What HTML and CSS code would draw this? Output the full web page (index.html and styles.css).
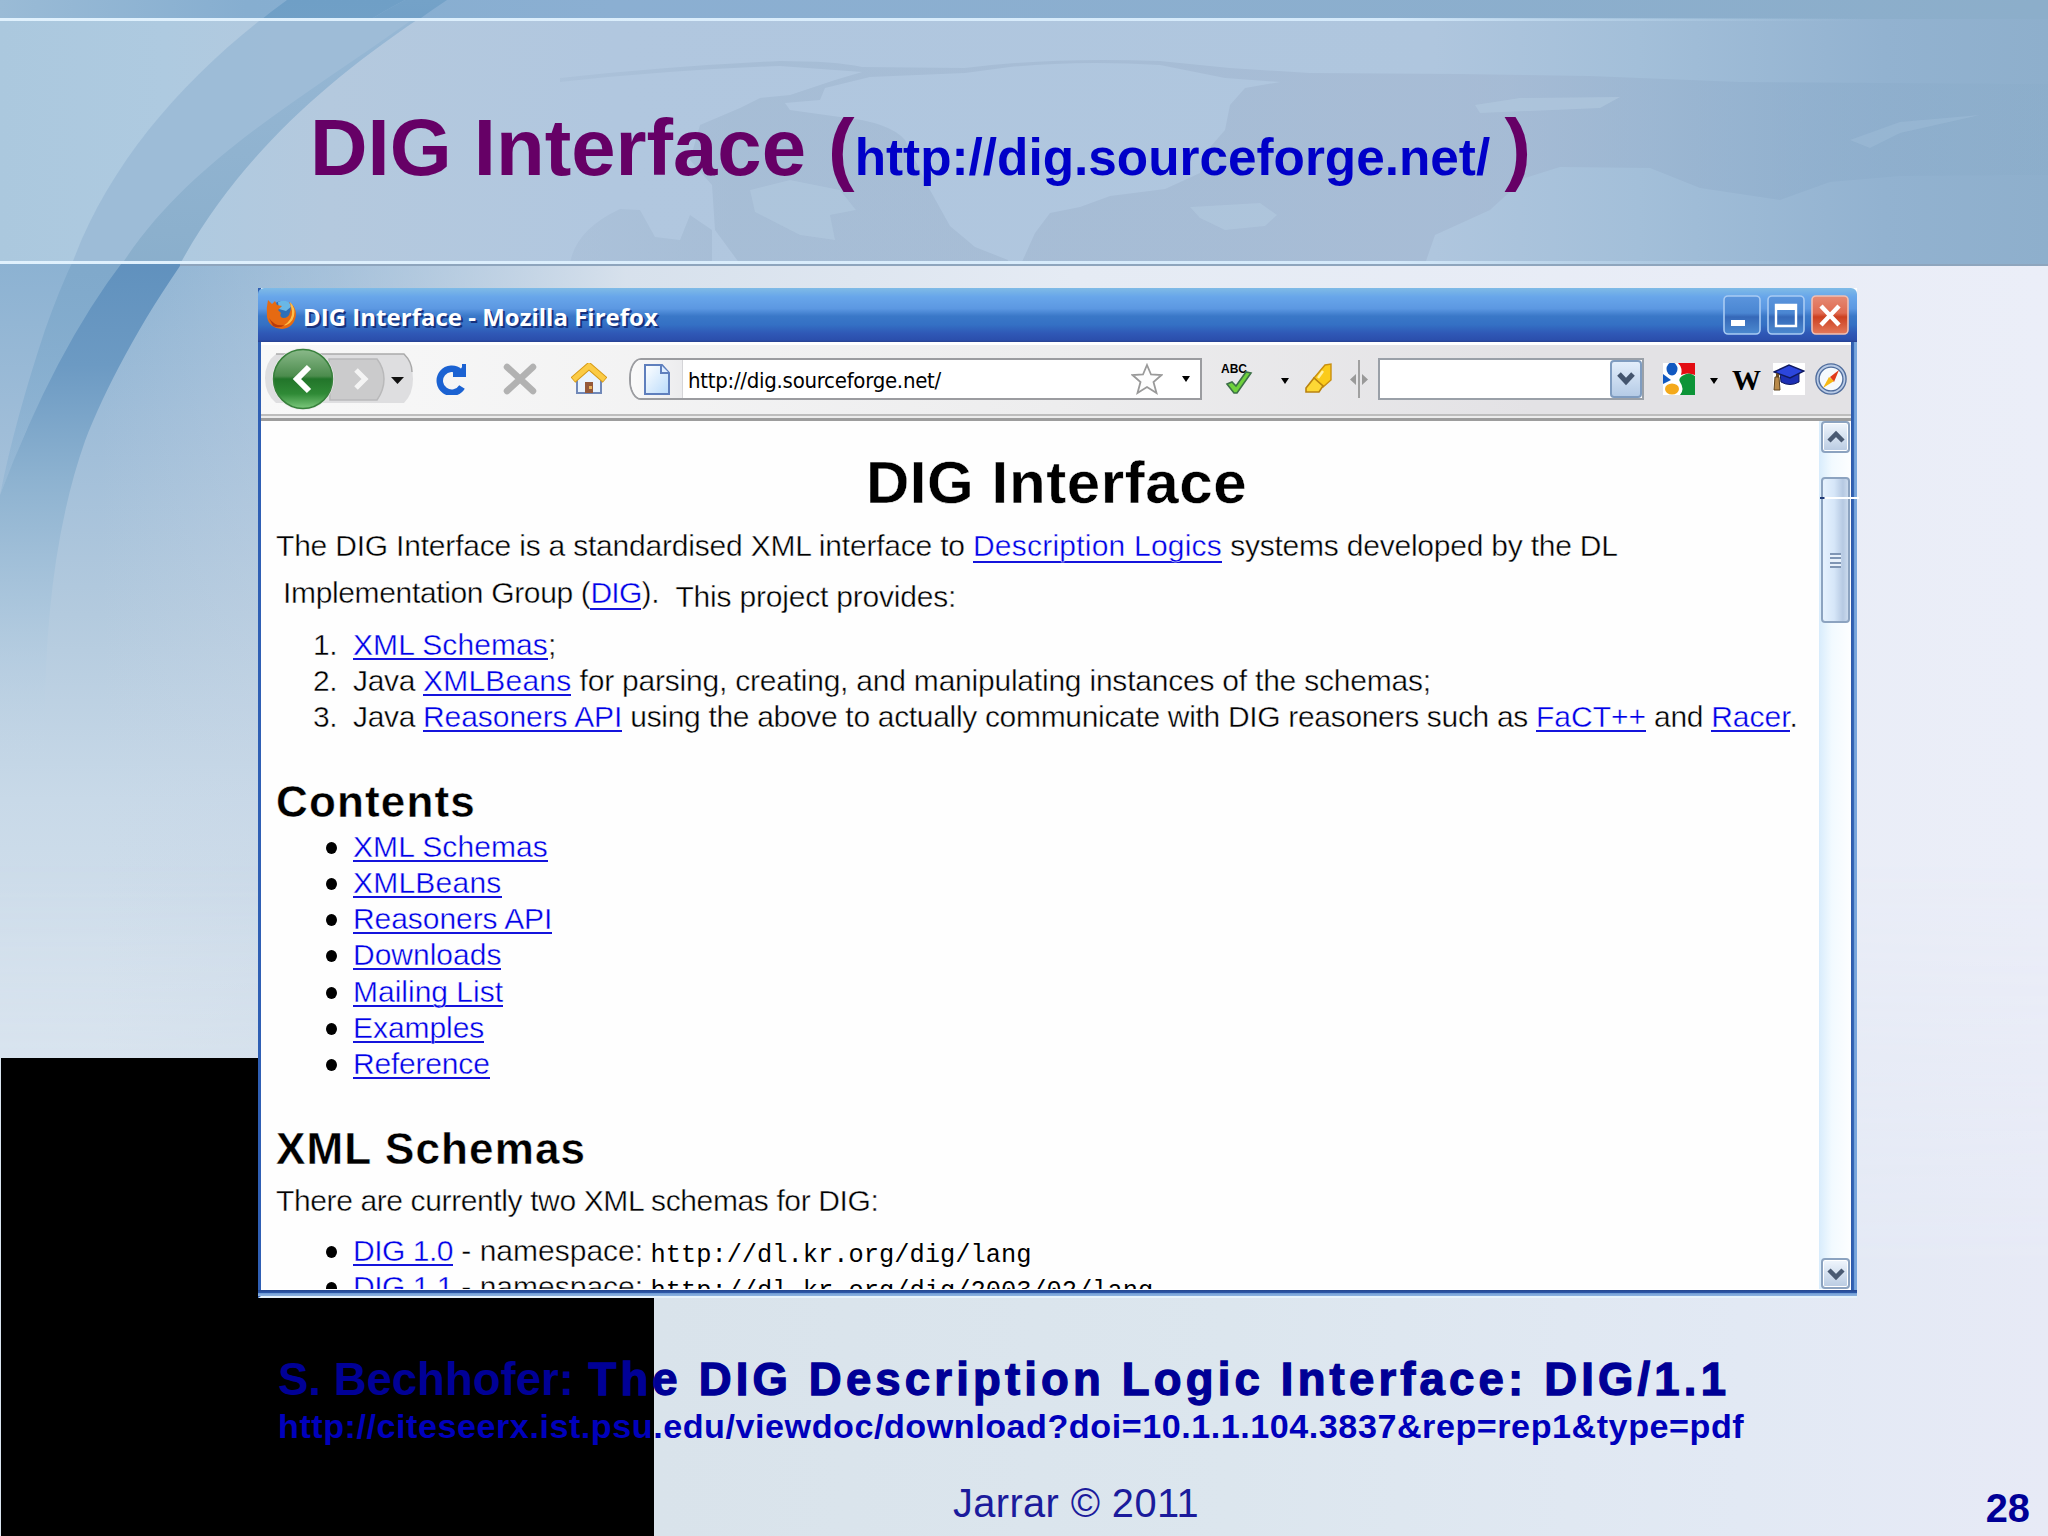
FILE: index.html
```
<!DOCTYPE html>
<html lang="en">
<head>
<meta charset="utf-8">
<title>DIG Interface</title>
<link rel="stylesheet" href="styles.css">
</head>
<body>
<main class="slide">
  <svg class="backdrop" viewBox="0 0 2048 1536" width="2048" height="1536" aria-hidden="true">
    <defs>
      <linearGradient id="sky" x1="0" y1="0" x2="0" y2="1"><stop offset="0" stop-color="#84add0"/><stop offset=".17" stop-color="#8cb2d2"/><stop offset=".28" stop-color="#9fbdd8"/><stop offset=".4" stop-color="#b3cade"/><stop offset=".52" stop-color="#c8d9e8"/><stop offset=".7" stop-color="#d9e4ef"/><stop offset="1" stop-color="#dae7ef"/></linearGradient>
      <linearGradient id="pale" x1="0" y1="0" x2="1" y2="0"><stop offset="0" stop-color="#c9d6e6" stop-opacity="0"/><stop offset=".12" stop-color="#c9d6e6" stop-opacity=".42"/><stop offset=".27" stop-color="#dfe6ef" stop-opacity=".9"/><stop offset=".5" stop-color="#e5ebf4"/><stop offset="1" stop-color="#ebeef8"/></linearGradient>
      <linearGradient id="floor" x1="0" y1="0" x2="1" y2="0"><stop offset="0" stop-color="#d9e4ef"/><stop offset=".32" stop-color="#d9e3eb"/><stop offset=".6" stop-color="#dce6ee"/><stop offset=".85" stop-color="#e2e9f4"/><stop offset="1" stop-color="#e7eaf6"/></linearGradient>
      <linearGradient id="floorFade" x1="0" y1="0" x2="0" y2="1"><stop offset="0" stop-color="#000"/><stop offset=".6" stop-color="#fff"/></linearGradient>
      <mask id="floorMask" maskUnits="userSpaceOnUse" x="0" y="860" width="2048" height="676"><rect y="860" width="2048" height="676" fill="url(#floorFade)"/></mask>
      <linearGradient id="band" x1="0" y1="0" x2="1" y2="0"><stop offset="0" stop-color="#abc8de"/><stop offset=".08" stop-color="#aecae0"/><stop offset=".16" stop-color="#b4c9de"/><stop offset=".3" stop-color="#b1c7df"/><stop offset=".7" stop-color="#afc6de"/><stop offset=".8" stop-color="#a3bfd9"/><stop offset=".92" stop-color="#92b2d0"/><stop offset="1" stop-color="#8eafcc"/></linearGradient>
      <linearGradient id="strip" x1="0" y1="0" x2="1" y2="0"><stop offset="0" stop-color="#9abbd6"/><stop offset=".12" stop-color="#86aed0"/><stop offset=".3" stop-color="#8bafd2"/><stop offset="1" stop-color="#8caeca"/></linearGradient>
      <linearGradient id="sea" gradientUnits="userSpaceOnUse" x1="500" y1="0" x2="2048" y2="0"><stop offset="0" stop-color="#9db4cd" stop-opacity=".2"/><stop offset=".15" stop-color="#9db4cd" stop-opacity=".5"/><stop offset=".65" stop-color="#a2b6d0" stop-opacity=".6"/><stop offset=".85" stop-color="#8aaac9" stop-opacity=".45"/><stop offset="1" stop-color="#86a9c6" stop-opacity=".2"/></linearGradient>
      <linearGradient id="rule" x1="0" y1="0" x2="1" y2="0"><stop offset="0" stop-color="#e0f1fd"/><stop offset=".68" stop-color="#d4e9fa"/><stop offset=".91" stop-color="#a8c8e2" stop-opacity="0"/></linearGradient>
      <linearGradient id="arcDark" gradientUnits="userSpaceOnUse" x1="0" y1="0" x2="0" y2="760"><stop offset="0" stop-color="#74a2c8"/><stop offset=".33" stop-color="#5f90bd"/><stop offset=".48" stop-color="#6c9ac3"/><stop offset=".63" stop-color="#8db2d0"/><stop offset=".8" stop-color="#a9c5dc" stop-opacity=".8"/><stop offset="1" stop-color="#c6d8e8" stop-opacity="0"/></linearGradient>
      <linearGradient id="arcLight" gradientUnits="userSpaceOnUse" x1="0" y1="0" x2="0" y2="490"><stop offset="0" stop-color="#6f9fc6"/><stop offset=".55" stop-color="#80a9cb"/><stop offset="1" stop-color="#7fabce" stop-opacity=".3"/></linearGradient>
      <linearGradient id="arcBand" gradientUnits="userSpaceOnUse" x1="0" y1="0" x2="0" y2="264"><stop offset="0" stop-color="#94b6d4" stop-opacity=".9"/><stop offset="1" stop-color="#82a9c7"/></linearGradient>
      <clipPath id="bandClip"><rect y="19" width="2048" height="243"/></clipPath>
    </defs>
    <rect width="2048" height="1536" fill="url(#sky)"/>
    <path d="M100 0H2048V1536H100Z" fill="url(#pale)"/>
    <rect y="860" width="2048" height="676" fill="url(#floor)" mask="url(#floorMask)"/>
    <rect width="2048" height="19" fill="url(#strip)"/>
    <path d="M287 0C170 85 90 200 45 330Q15 420 0 495L26 431Q60 360 124 260C190 165 290 60 405 0Z" fill="url(#arcLight)"/>
    <path d="M405 0C290 60 190 165 124 260Q55 350 0 495V768H46C42 660 50 540 85 441C130 325 250 130 447 0Z" fill="url(#arcDark)"/>
    <rect y="19" width="2048" height="245" fill="url(#band)"/>
    <g clip-path="url(#bandClip)">
      <path d="M287 0C190 70 110 160 72 264H180C240 155 330 75 447 0Z" fill="#9bbad6" opacity=".9"/>
      <path d="M420 14C300 100 190 160 122 264H180C240 155 330 75 447 0Z" fill="url(#arcBand)" opacity=".7"/>
      <g fill="url(#sea)">
        <path d="M560 78Q670 66 780 61Q835 61 862 67L965 68Q1050 57 1160 61L1230 68L1310 73L1460 74L1590 76L1740 82L2048 84V175L1900 176L1830 182L1780 200L1700 188L1650 168L1560 167L1525 178L1490 210L1435 235L1425 264H1021L1035 233L1050 213L1080 207L1110 196L1165 189L1200 173L1205 153L1225 130L1230 105L1245 88L1280 82L1225 78L1160 65Q1080 60 1010 67L965 73L870 77L825 88L820 100L785 103L790 110L840 117Q890 122 905 140L930 190L950 226L975 247L1008 260V264H740L715 230L712 185L690 160L700 125L740 108L760 98L790 95L835 80L862 72L780 66Q670 70 560 82Z"/>
        <path d="M570 264Q575 230 620 209L640 210L655 237L680 240L690 215L712 230V264Z"/>
      </g>
      <path d="M750 190L790 180L840 190L856 210L830 215L835 240L800 235L755 212ZM1190 207L1260 203L1277 215L1265 226L1225 230L1200 218ZM1475 105L1520 98L1620 97L1600 108L1480 113Z" fill="#b2c9e0" opacity=".6"/>
      <path d="M1850 140L1900 122L1980 115L1900 133L1870 148Z" fill="#a6c2dc" opacity=".35"/>
    </g>
    <rect y="18" width="2048" height="3" fill="url(#rule)"/>
    <rect y="261" width="2048" height="3" fill="url(#rule)"/>
    <rect x="180" y="264" width="1868" height="2" fill="#8ea5bd"/>
    <rect x="1" y="1058" width="653" height="478" fill="#000"/>
  </svg>

  <header class="slide-head">
    <h1 class="slide-title">DIG Interface (<a class="slide-url">http://dig.sourceforge.net/ </a>)</h1>
  </header>

  <section class="window">
    <div class="titlebar">
      <svg class="fox" viewBox="0 0 32 32" width="32" height="32"><circle cx="17" cy="15" r="12" fill="#2f6fb8"/><path d="M13 4Q22 0 27 8L21 13L14 11Z" fill="#69b7e6"/><path d="M3 2L7 6L10 3L12 7L17 8L13 12L16 15Q14 19 18 20Q24 20 25 14Q27 9 24 4Q31 8 31 17Q29 30 17 31Q4 30 2 19Q1 10 3 2Z" fill="#e66a12"/><path d="M25 4Q31 10 29 18Q27 26 18 28Q28 22 27 13Z" fill="#fdc04a"/><path d="M4 20Q10 29 20 27Q14 31 8 28Z" fill="#b83a0c"/></svg>
      <span class="caption">DIG Interface - Mozilla Firefox</span>
      <div class="win-buttons">
        <svg viewBox="0 0 38 40" width="38" height="40"><rect class="wb" x="1" y="1" width="36" height="38" rx="4"/><rect x="8" y="25" width="14" height="6" fill="#fff"/></svg>
        <svg viewBox="0 0 38 40" width="38" height="40"><rect class="wb" x="1" y="1" width="36" height="38" rx="4"/><path d="M9 10H29V31H9Z" fill="none" stroke="#fff" stroke-width="2.4"/><path d="M8 9H30V15H8Z" fill="#fff"/></svg>
        <svg viewBox="0 0 38 40" width="38" height="40"><defs><linearGradient id="wbFill" x1="0" y1="0" x2="0" y2="1"><stop offset="0" stop-color="#5b95dd"/><stop offset=".45" stop-color="#4a86d2"/><stop offset=".55" stop-color="#3568b8"/><stop offset="1" stop-color="#4c8ad0"/></linearGradient><linearGradient id="closeFill" x1="0" y1="0" x2="0" y2="1"><stop offset="0" stop-color="#e58a74"/><stop offset=".45" stop-color="#df6a50"/><stop offset=".55" stop-color="#cc4020"/><stop offset="1" stop-color="#e57a5c"/></linearGradient></defs><rect class="wb close" x="1" y="1" width="36" height="38" rx="4"/><path d="M10 11L28 30M28 11L10 30" stroke="#fff" stroke-width="4.4"/></svg>
      </div>
    </div>

    <div class="toolbar">
      <svg class="nav" viewBox="0 0 150 62" width="150" height="62">
        <defs><linearGradient id="green" x1="0" y1="0" x2="0" y2="1"><stop offset="0" stop-color="#8ab98a"/><stop offset=".45" stop-color="#4c8c4d"/><stop offset=".5" stop-color="#22752a"/><stop offset=".75" stop-color="#2f8a36"/><stop offset="1" stop-color="#7cc87c"/></linearGradient></defs>
        <path d="M12 6H140Q149 16 149 31T140 55H12Q1 46 1 30T12 6Z" fill="#dedee0"/><path d="M12 6H140Q148 14 148 24" fill="none" stroke="#aaa" stroke-width="1.5"/>
        <path d="M65 11H113Q120 20 120 31T113 52H66Z" fill="#cbcbcc" stroke="#b9b9ba" stroke-width="1.5"/>
        <path d="M92 22L101 31L92 40" fill="none" stroke="#f4f4f4" stroke-width="5"/>
        <path d="M127 29H140L133.500 36Z" fill="#111"/>
        <circle cx="39" cy="31" r="31" fill="#e9e9e9"/><circle cx="39" cy="31" r="29.500" fill="url(#green)" stroke="#37803b" stroke-width="1.500"/>
        <path d="M45 19L33 31L45 43" fill="none" stroke="#fff" stroke-width="6"/>
      </svg>
      <svg class="reload" viewBox="0 0 32 32" width="32" height="32"><path d="M27 24A12 12 0 1 1 25 9" fill="none" stroke="#1b62d2" stroke-width="6.500"/><path d="M31 1V14H18V9H24L27 4V1Z" fill="#1b62d2"/></svg>
      <svg class="stop" viewBox="0 0 34 32" width="34" height="32"><path d="M4 4L30 28M30 4L4 28" stroke="#b2b2b2" stroke-width="6.500" stroke-linecap="round"/></svg>
      <svg class="home" viewBox="0 0 36 32" width="36" height="32"><path d="M6 16L18 6L30 16V30H6Z" fill="#e9f3fd" stroke="#7088b8" stroke-width="2"/><path d="M2 17L18 3L34 17" fill="none" stroke="#d79b18" stroke-width="7"/><path d="M2.500 16.500L18 3L33.500 16.500" fill="none" stroke="#fbcb45" stroke-width="5"/><path d="M14 19H22V30H14Z" fill="#94593a"/><rect x="18" y="23" width="3" height="3" fill="#e9b35c"/></svg>

      <div class="address">
        <span class="favicon"><svg viewBox="0 0 26 31" width="26" height="31"><defs><linearGradient id="sheet" x1="0" y1="0" x2="1" y2="1"><stop offset="0" stop-color="#fff"/><stop offset="1" stop-color="#b9dbfb"/></linearGradient></defs><path d="M1 1H18L25 9V30H1Z" fill="url(#sheet)" stroke="#5f7fbd" stroke-width="2"/><path d="M17 1V9H25" fill="#dfeeff" stroke="#5f7fbd" stroke-width="2"/></svg></span>
        <span class="address-text">http://dig.sourceforge.net/</span>
        <svg class="star" viewBox="0 0 32 32" width="32" height="32"><path d="M16 2L20 11.500L30.500 12L22.500 19L25.500 30L16 24L6.500 30L9.500 19L1.500 12L12 11.500Z" fill="#fdfdfd" stroke="#9a9a9a" stroke-width="1.800"/></svg>
        <svg class="arrow" viewBox="0 0 8 6" width="8" height="6"><path d="M0 0H8L4 6Z"/></svg>
      </div>

      <svg class="spell" viewBox="0 0 32 32" width="32" height="32"><text x="0" y="10" class="abc" textLength="26" lengthAdjust="spacingAndGlyphs">ABC</text><path d="M6 21L11 19L15 23L25 9L30 10L16 30H13Z" fill="#6fd13c" stroke="#3d7047" stroke-width="1.600"/></svg>
      <svg class="arrow spell-arrow" viewBox="0 0 8 6" width="8" height="6"><path d="M0 0H8L4 6Z"/></svg>
      <svg class="marker" viewBox="0 0 28 31" width="28" height="31"><path d="M20 2L26 1V17L18 24L9 15Z" fill="#fbcb1a" stroke="#c98f10" stroke-width="1.400"/><path d="M9 15L18 23L14 29H1V25Z" fill="#fdd835" stroke="#b98310" stroke-width="1.600"/><path d="M18 8L13 15" stroke="#fff0a0" stroke-width="2.500"/></svg>
      <svg class="splitter" viewBox="0 0 18 38" width="18" height="38"><path d="M9 0V38" stroke="#888" stroke-width="1.500"/><path d="M6 14V25L0 19.500ZM12 14V25L18 19.500Z" fill="#999"/></svg>

      <div class="search"><span class="drop"><svg viewBox="0 0 18 14" width="18" height="14"><path d="M2 2L9 9.500L16 2" fill="none" stroke="#44556e" stroke-width="5"/></svg></span></div>

      <svg class="google" viewBox="0 0 32 32" width="32" height="32"><rect width="32" height="32" fill="#fff"/><path d="M15 0H32V12Q24 9 18 12Q20 5 15 0Z" fill="#e30c12"/><path d="M19 13Q26 8 32 13V32H17Q22 26 17 19Q15 16 19 13Z" fill="#0c9437"/><ellipse cx="9" cy="6" rx="5.500" ry="6.500" fill="#1158c0"/><path d="M0 11L8 17L0 21Z" fill="#1158c0"/><ellipse cx="9" cy="26" rx="7" ry="5.500" fill="#f4a91b"/></svg>
      <svg class="arrow google-arrow" viewBox="0 0 8 6" width="8" height="6"><path d="M0 0H8L4 6Z"/></svg>
      <span class="wiki">W</span>
      <svg class="hat" viewBox="0 0 32 32" width="32" height="32"><rect width="32" height="32" fill="#fff"/><path d="M7 10L26 10V19Q17 24 8 19Z" fill="#1c2fb4" stroke="#101a60"/><path d="M1 9L16 2L31 8L17 15Z" fill="#2c46dd" stroke="#101a60" stroke-width="1.400"/><path d="M3 10V15H6V11" fill="#6b4b20"/><path d="M2 14H6L7 27H1Z" fill="#b98a4a" stroke="#5d431f"/></svg>
      <svg class="compass" viewBox="0 0 32 32" width="32" height="32"><circle cx="16" cy="16" r="13.500" fill="#f5f9fd" stroke="#4f6c9c" stroke-width="4.500"/><circle cx="16" cy="16" r="13.500" fill="none" stroke="#b9cbe6" stroke-width="1.800"/><path d="M24 7L19 19L15 14Z" fill="#e03a1c"/><path d="M8 25L14 14L19 18Z" fill="#f7b915"/></svg>
    </div>

    <div class="viewport">
      <article class="page">
        <h1 class="page-title">DIG Interface</h1>
        <p class="intro"><span class="t-a">The DIG Interface is a standardised XML interface to </span><a class="link t-b">Description Logics</a><span class="t-a2"> systems developed by the DL</span></p>
        <p class="intro second"><span class="t-c">Implementation Group (</span><a class="link t-d">DIG</a><span>).</span><span class="provides">This project provides:</span></p>
        <ol class="list">
          <li class="item"><span class="num">1.</span><a class="link t-e">XML Schemas</a>;</li>
          <li class="item"><span class="num">2.</span><span class="t-c">Java </span><a class="link t-b">XMLBeans</a><span class="t-a2"> for parsing, creating, and manipulating instances of the schemas;</span></li>
          <li class="item"><span class="num">3.</span><span class="t-c">Java </span><a class="link t-f">Reasoners API</a><span class="t-g"> using the above to actually communicate with DIG reasoners such as </span><a class="link">FaCT++</a><span class="t-g"> and </span><a class="link">Racer</a>.</li>
        </ol>
        <h2 class="section">Contents</h2>
        <ul class="list">
          <li class="item"><i class="dot"></i><a class="link t-e">XML Schemas</a></li>
          <li class="item"><i class="dot"></i><a class="link t-b">XMLBeans</a></li>
          <li class="item"><i class="dot"></i><a class="link t-f">Reasoners API</a></li>
          <li class="item"><i class="dot"></i><a class="link">Downloads</a></li>
          <li class="item"><i class="dot"></i><a class="link">Mailing List</a></li>
          <li class="item"><i class="dot"></i><a class="link t-f">Examples</a></li>
          <li class="item"><i class="dot"></i><a class="link t-a">Reference</a></li>
        </ul>
        <h2 class="section schemas">XML Schemas</h2>
        <p class="intro current">There are currently two XML schemas for DIG:</p>
        <ul class="list">
          <li class="item"><i class="dot"></i><a class="link t-h">DIG 1.0</a><span> - namespace: </span><code class="ns">http://dl.kr.org/dig/lang</code></li>
          <li class="item"><i class="dot"></i><a class="link t-h">DIG 1.1</a><span> - namespace: </span><code class="ns">http://dl.kr.org/dig/2003/02/lang</code></li>
        </ul>
      </article>
      <div class="scrollbar">
        <span class="sb-btn"><svg viewBox="0 0 18 14" width="18" height="14"><path d="M2 11L9 4L16 11" fill="none" stroke="#4a5a72" stroke-width="4.500"/></svg></span>
        <span class="thumb"><i class="grip"></i></span>
        <span class="sb-btn down"><svg viewBox="0 0 18 14" width="18" height="14"><path d="M2 3L9 10L16 3" fill="none" stroke="#4a5a72" stroke-width="4.500"/></svg></span>
      </div>
    </div>
    <i class="seam"></i>
  </section>

  <section class="citation">
    <p class="cite-title">S. Bechhofer: <span class="cite-name">The DIG Description Logic Interface: DIG/1.1</span></p>
    <p class="cite-url">http://citeseerx.ist.psu.edu/viewdoc/download?doi=10.1.1.104.3837&amp;rep=rep1&amp;type=pdf</p>
  </section>
  <footer class="slide-foot"><span class="author">Jarrar © 2011</span><span class="page-no">28</span></footer>
</main>
</body>
</html>
```
FILE: styles.css
```
* { box-sizing: border-box; margin: 0; padding: 0; }
body { width: 2048px; height: 1536px; overflow: hidden; font-family: "Liberation Sans", Arial, sans-serif; }
svg { display: block; flex: none; }
.slide { position: relative; width: 2048px; height: 1536px; overflow: hidden; display: flex; flex-direction: column; isolation: isolate; }
.backdrop { position: absolute; left: 0; top: 0; z-index: -1; }

.slide-head { height: 266px; flex: none; padding: 102px 0 0 306px; }
.slide-title { padding-left: 4px; font-size: 79.7px; line-height: 92px; color: #606; white-space: pre; }
.slide-url { font-size: 51.3px; color: #0000c8; }

/* browser window */
.window { position: relative; flex: none; width: 1599px; height: 1010px; margin: 22px 0 0 258px; display: flex; flex-direction: column;
  border-left: 3px solid #2f5fb4; border-bottom: 2px solid #e6f3fb; background: #fff; }
.titlebar { height: 54px; margin-left: -3px; flex: none; display: flex; align-items: flex-start; border-radius: 6px 6px 0 0;
  background: linear-gradient(#7fbbe6 0, #68a6ea 16%, #5c98e2 38%, #3a78c8 52%, #3470c4 68%, #2f58b6 84%, #2b4fac 96%, #274190 100%); }
.fox { margin: 10px 0 0 7px; }
.caption { margin: 12px 0 0 6px; font: bold 24px/34px "Open Sans", sans-serif; letter-spacing: .01px; color: #fff; text-shadow: 2px 2px 0 #16327e; white-space: pre; }
.win-buttons { margin: 7px 8px 0 auto; display: flex; gap: 6px; }
.wb { fill: url(#wbFill); stroke: #a9cbf3; stroke-width: 1.6; }
.close { fill: url(#closeFill); stroke: #f0c0b4; }

.toolbar { height: 79px; flex: none; margin-right: 6px; display: flex; align-items: flex-start; padding-top: 21px;
  background: linear-gradient(#fff 0, #fff 3px, transparent 3px, transparent 72px, #bdbdbd 72px, #bdbdbd 74px, #ececec 74px, #ececec 76px, #9d9d9d 76px), linear-gradient(90deg, #f8f8f8, #ededee 50%, #e3e2e5 80%, #e3e2e5); }
.nav { margin: -15px 0 0 3px; }
.reload { margin-left: 21px; }
.stop { margin-left: 36px; }
.home { margin-left: 34px; }
.address { width: 573px; height: 42px; flex: none; margin: -5px 0 0 22px; display: flex; align-items: center; background: #fff; border: 2px solid #9b9ca0; border-radius: 12px 0 0 12px / 20px 0 0 20px; overflow: hidden; }
.favicon { width: 52px; height: 100%; padding-left: 13px; display: flex; align-items: center; background: linear-gradient(90deg, #fafafa, #ececee); border-right: 1px solid #d5d5d8; }
.address-text { margin: 3px auto 0 5px; font: 22px/30px "DejaVu Sans Condensed", sans-serif; letter-spacing: -.27px; color: #000; }
.star { margin-right: 19px; }
.address .arrow { margin-right: 10px; }
.spell { margin-left: 19px; }
.abc { font: bold 13px "Liberation Sans", sans-serif; fill: #000; }
.spell-arrow { margin: 15px 0 0 28px; }
.marker { margin-left: 16px; }
.splitter { margin: -3px 0 0 17px; }
.search { width: 266px; height: 42px; flex: none; margin: -5px 0 0 10px; display: flex; justify-content: flex-end; background: #fff; border: 2px solid #9aa0a8; }
.drop { width: 32px; display: flex; align-items: center; justify-content: center; background: linear-gradient(#e3eefb, #b5cbe6); border: 2px solid #7f9cc0; border-radius: 4px; }
.google { margin-left: 19px; }
.google-arrow { margin: 15px 0 0 15px; }
.wiki { margin: 2px 0 0 14px; width: 31px; font: bold 29px/30px "Liberation Serif", serif; color: #000; }
.hat { margin-left: 10px; }
.compass { margin-left: 10px; }

.viewport { height: 868px; flex: none; margin-right: 6px; display: flex; overflow: hidden; background: #fefefe; }
.page { flex: 1; padding: 32px 0 0 15px; font-size: 30px; line-height: 36px; color: #000; overflow: hidden; -webkit-text-stroke: .4px #fefefe; }
.page-title { padding-left: 18px; text-align: center; font-size: 60px; line-height: 60px; letter-spacing: .6px; }
.intro { display: flex; margin-top: 14.6px; height: 36px; letter-spacing: -.2px; white-space: pre; }
.intro.second { margin-top: 11px; padding-left: 7px; }
.provides { margin-left: 16px; padding-top: 4px; }
.list { list-style: none; padding-left: 77px; margin-top: 2px; line-height: 36.2px; }
.intro.second + .list { margin-top: 16px; }
.item { position: relative; height: 36.2px; white-space: pre; }
.num { position: absolute; left: -40px; letter-spacing: -.5px; }
.dot { position: absolute; left: -27px; top: 13px; width: 11px; height: 12px; border-radius: 50%; background: #000; }
.link { color: #0000e8; background: linear-gradient(#1414dc, #1414dc) no-repeat 0 calc(100% - 1px) / 100% 2px; }
.section { font-size: 44px; line-height: 50px; letter-spacing: 1.15px; margin-top: 41.6px; }
.schemas { margin-top: 42px; }
.intro.current { margin-top: 9px; letter-spacing: -.38px; }
.intro.current + .list { margin-top: 14px; }
.ns { font: 25.4px "Liberation Mono", monospace; position: relative; top: 1px; margin-left: -1px; -webkit-text-stroke: 0; }
.t-a { letter-spacing: -.2px; }
.t-a2 { letter-spacing: -.22px; }
.t-b { letter-spacing: .22px; }
.t-c { letter-spacing: -.35px; }
.t-d { letter-spacing: -.778px; }
.t-e { letter-spacing: .084px; }
.t-f { letter-spacing: -.06px; }
.t-g { letter-spacing: -.32px; }
.t-h { letter-spacing: -.482px; }

.scrollbar { width: 32px; flex: none; display: flex; flex-direction: column; align-items: center; background: linear-gradient(90deg, #d8ecfc, #f2faff 40%, #fdfeff); padding-left: 1px; }
.sb-btn { width: 29px; height: 32px; flex: none; display: flex; align-items: center; justify-content: center; background: linear-gradient(#f0f6fd, #b9cbe2); border: 2px solid #8ca3c0; border-radius: 4px; box-shadow: inset 0 0 0 1px #fff; }
.thumb { width: 29px; height: 146px; flex: none; margin-top: 24px; display: flex; align-items: center; justify-content: center; background: linear-gradient(90deg, #e6f2fe, #d6e6f8 45%, #b6c9e2 80%, #cbdaed); border: 2px solid #8ca3c0; border-radius: 4px; }
.grip { width: 11px; height: 15px; margin-top: 20px; background: repeating-linear-gradient(#7f95b4 0, #7f95b4 2px, #e8f1fb 2px, #e8f1fb 4.3px); }
.sb-btn.down { margin-top: auto; height: 31px; }

.window::before { content: ""; position: absolute; right: 0; top: 54px; bottom: 0; width: 6px; background: linear-gradient(90deg, #2c56a8 0, #3568b8 45%, #79a6dc 60%, #79a6dc); }
.window::after { content: ""; position: absolute; left: -3px; right: 0; bottom: 0; height: 6px; background: linear-gradient(#24468f 0, #2c58a8 45%, #7aa5da 60%, #8ab0de); }
.seam { position: absolute; right: -2px; top: 209px; width: 39px; height: 2px; background: linear-gradient(90deg, #1f3a78 0, #1f3a78 4px, #fff 5px); }

/* captions under the window */
.citation { flex: none; padding: 56px 0 0 278px; color: #000096; font-weight: bold; white-space: nowrap; }
.cite-title { font-size: 45.5px; line-height: 52px; }
.cite-name { margin-left: 2px; letter-spacing: 4.17px; -webkit-text-stroke: 1.3px #000096; }
.cite-url { font-size: 34.13px; line-height: 40px; letter-spacing: .54px; color: #0000bc; }
.slide-foot { flex: none; display: flex; justify-content: space-between; padding: 34px 18px 0 953px; font-size: 39.8px; line-height: 46px; color: #1b1b9c; letter-spacing: .39px; }
.page-no { font-weight: bold; color: #000096; padding-top: 5px; letter-spacing: 0; }
```
